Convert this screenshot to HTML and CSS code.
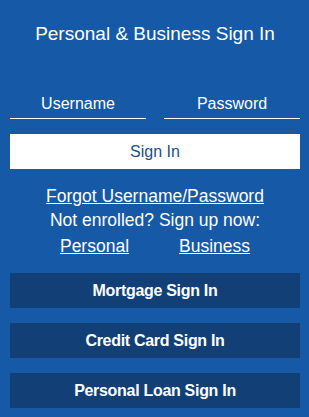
FILE: index.html
```html
<!DOCTYPE html>
<html lang="en">
<head>
    <meta charset="UTF-8">
    <meta name="viewport" content="width=device-width, initial-scale=1.0">
    <title>Sign In</title>
    <link rel="stylesheet" href="styles.css">
</head>
<body>
    <div class="panel">
        <h2 class="title">Personal &amp; Business Sign In</h2>

        <form class="login-form">
            <div class="fields">
                <input type="text" class="field" placeholder="Username">
                <input type="password" class="field" placeholder="Password">
            </div>
            <button type="submit" class="signin-btn">Sign In</button>
        </form>

        <div class="links">
            <a href="#" class="link">Forgot Username/Password</a>
            <p class="enroll">Not enrolled? Sign up now:</p>
            <div class="enroll-links">
                <a href="#" class="link">Personal</a>
                <a href="#" class="link">Business</a>
            </div>
        </div>

        <div class="other-signins">
            <a href="#" class="dark-btn">Mortgage Sign In</a>
            <a href="#" class="dark-btn">Credit Card Sign In</a>
            <a href="#" class="dark-btn">Personal Loan Sign In</a>
        </div>
    </div>
</body>
</html>
```

FILE: styles.css
```css
body {
    margin: 0;
    background-color: #1659a6;
    font-family: "Liberation Sans", Arial, sans-serif;
    color: #fff;
}
.panel {
    padding: 22px 9px 10px 10px;
}
.title {
    margin: 0;
    font-size: 19px;
    font-weight: normal;
    text-align: center;
    line-height: 24px;
}
.login-form {
    margin-top: 48px;
}
.fields {
    display: flex;
    gap: 18px;
}
.field {
    flex: 1;
    min-width: 0;
    background: transparent;
    border: none;
    border-bottom: 1px solid #fff;
    color: #fff;
    font-family: inherit;
    font-size: 16px;
    text-align: center;
    padding: 0 0 4px;
    height: 25px;
    box-sizing: border-box;
    border-radius: 0;
    outline: none;
}
.field::placeholder {
    color: #fff;
    opacity: 1;
}
.signin-btn {
    display: block;
    width: 100%;
    margin-top: 15px;
    height: 35px;
    background-color: #fff;
    border: none;
    color: #1d4f88;
    font-family: inherit;
    font-size: 16px;
    cursor: pointer;
}
.links {
    margin-top: 15px;
    text-align: center;
    font-size: 17.5px;
    line-height: 24px;
}
.link {
    color: #fff;
    text-decoration: underline;
}
.enroll {
    margin: 0;
}
.enroll-links {
    display: flex;
    justify-content: center;
    gap: 50px;
    margin-top: 2px;
}
.other-signins {
    display: flex;
    flex-direction: column;
    gap: 15px;
    margin-top: 15px;
}
.dark-btn {
    display: block;
    height: 35px;
    line-height: 35px;
    background-color: #123f76;
    color: #fff;
    text-align: center;
    text-decoration: none;
    font-weight: bold;
    font-size: 16px;
    letter-spacing: -0.3px;
}
```
